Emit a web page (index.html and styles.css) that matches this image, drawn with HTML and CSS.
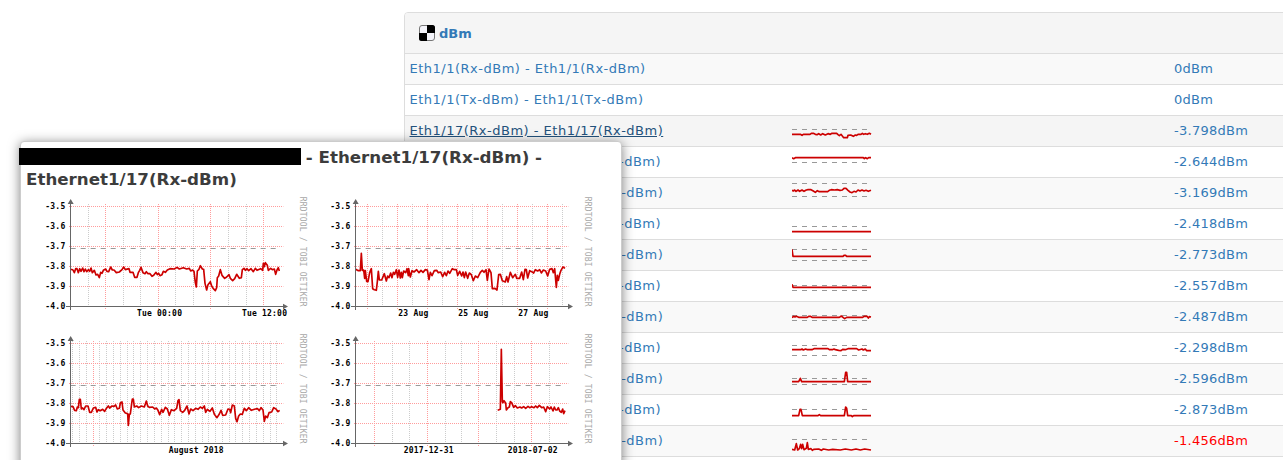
FILE: index.html
```html
<!DOCTYPE html>
<html lang="en">
<head>
  <meta charset="UTF-8">
  <title>dBm Sensors</title>
  <link rel="stylesheet" href="styles.css">
</head>
<body>

<!-- Sensor table -->
<div class="panel">
  <div class="panel-heading">
    <svg class="icon" width="16" height="16" viewBox="0 0 16 16">
      <rect x="0.5" y="0.5" width="15" height="15" rx="2.5" fill="#f4f4fa" stroke="#777"/>
      <path d="M8 0h5.5A2.5 2.5 0 0 1 16 2.5V8H8z M0 8h8v8H2.5A2.5 2.5 0 0 1 0 13.5z" fill="#000"/>
    </svg>
    <a>dBm</a>
  </div>
  <table class="sensors">
    <colgroup><col class="col-name"><col class="col-graph"><col></colgroup>
    <tbody id="sensorRows"></tbody>
  </table>
</div>

<!-- Graph popup -->
<div class="popup">
  <div class="popup-title"><span class="redacted"></span> - Ethernet1/17(Rx-dBm) - Ethernet1/17(Rx-dBm)</div>
  <div class="graphs" id="graphs"></div>
</div>

<script src="script.js"></script>
</body>
</html>
```

FILE: styles.css
```css
* { box-sizing: border-box; }
html, body {
  height: 100%;
  margin: 0;
  overflow: hidden;
  background: #fff;
  font-family: Verdana, "DejaVu Sans", sans-serif;
  font-size: 13px;
}
.panel {
  width: 920px;
  min-height: 480px;
  margin: 12px 0 0 404px;
  border: 1px solid #ddd;
  border-radius: 4px;
}
.panel-heading {
  display: flex;
  align-items: center;
  gap: 4px;
  height: 41px;
  padding: 0 14px;
  background: #f5f5f5;
  border-bottom: 1px solid #ddd;
  border-radius: 3px 3px 0 0;
  color: #337ab7;
  font-weight: bold;
}
.icon {
  display: block;
}
.sensors {
  width: 100%;
  table-layout: fixed;
  border-collapse: separate;
  border-spacing: 0;
}
.col-name { width: 382px; }
.col-graph { width: 382px; }
.sensors td {
  height: 31px;
  padding: 0 5px;
  border-bottom: 1px solid #ddd;
  color: #337ab7;
  line-height: 30px;
  white-space: nowrap;
}
.sensors tr:nth-child(odd) td { background: #f9f9f9; }
.sensors tr.active td { background: #f5f5f5; }
.sensors tr.active td.name {
  color: #23527c;
  text-decoration: underline;
}
.sensors td.name {
  padding-left: 4.5px;
  letter-spacing: 0.5px;
}
.sensors td.value { letter-spacing: 0.28px; }
.sensors tr.alert td.value { color: #f00; }
.sensors svg { display: block; }

.popup {
  position: absolute;
  left: 20px;
  top: 141px;
  width: 602px;
  height: 340px;
  padding: 4px 4px 0 5px;
  background: #fff;
  border: 1px solid #ccc;
  border-radius: 4px;
  box-shadow: 0 2px 12px rgba(0,0,0,0.5);
}
.popup-title {
  height: 44px;
  font-size: 16.7px;
  font-weight: bold;
  line-height: 22px;
  color: #3c3c3c;
}
.redacted {
  display: inline-block;
  width: 282px;
  height: 17px;
  margin: 0 -1px 0 -7px;
  vertical-align: -2px;
  background: #000;
}
.graphs {
  display: grid;
  grid-template-columns: 285px 285px;
  grid-auto-rows: 137px;
  margin-left: 4px;
}
.graphs svg { display: block; }

.axis-label {
  font-family: "DejaVu Sans Mono", monospace;
  font-size: 24px;
  font-weight: bold;
  letter-spacing: 0.6px;
}
.watermark {
  font-family: "DejaVu Sans Mono", monospace;
  font-size: 24px;
  letter-spacing: 0.55px;
  fill: #a8a8a8;
}
.grid-minor, .grid-major {
  stroke-width: 3;
  stroke-dasharray: 3 3;
}
.grid-minor { stroke: #ccc; }
.grid-major { stroke: #ff9c9c; }
.axis { stroke: #666; stroke-width: 3; }
.arrow { fill: #666; }
.limit {
  stroke: #999;
  stroke-width: 3;
  stroke-dasharray: 15 15;
}
.series {
  fill: none;
  stroke: #cc0000;
  stroke-width: 5;
  stroke-linejoin: round;
}
```

FILE: script.js
```js
// All plots use three drawing units per pixel.
const sensors = [
  { name: "Eth1/1(Rx-dBm)", value: "0dBm" },
  { name: "Eth1/1(Tx-dBm)", value: "0dBm" },
  { name: "Eth1/17(Rx-dBm)", value: "-3.798dBm", cls: "active", limits: [40.5], line: "0,55 25,55 30,58 34,55 54,55 58,52 64,52 70,55 75,56 80,53 86,57 92,53 100,57 108,53 115,55 120,52 134,52 138,56 142,59 147,55 151,60 155,65 166,65 168,58 176,57 184,61 190,57 194,58 198,55 207,55 211,52 215,55 220,53 226,55 232,52 237,55" },
  { name: "Eth1/17(Tx-dBm)", value: "-2.644dBm", limits: [46.5], line: "0,32 5,35 10,32 214,32 217,35 221,32 226,35 230,32 237,32" },
  { name: "Eth1/18(Rx-dBm)", value: "-3.169dBm", limits: [16.5, 55.5], line: "0,37 4,39 8,36 12,40 18,36 23,40 30,36 36,40 43,36 48,35 57,35 64,39 70,43 76,38 82,41 107,41 112,37 118,35 128,36 136,35 144,37 151,36 156,31 162,31 168,37 174,42 180,44 186,40 192,42 198,36 204,39 210,36 216,39 222,37 229,40 237,37" },
  { name: "Eth1/18(Tx-dBm)", value: "-2.418dBm", limits: [52.5], line: "0,68 237,68" },
  { name: "Eth1/19(Rx-dBm)", value: "-2.773dBm", limits: [28.5, 61.5], line: "0,28 3,49 153,49 156,46 161,46 164,49 237,49" },
  { name: "Eth1/19(Tx-dBm)", value: "-2.557dBm", limits: [43.5, 58.5], line: "0,40 3,49 237,49" },
  { name: "Eth1/20(Rx-dBm)", value: "-2.487dBm", limits: [40.5, 55.5], line: "0,47 5,43 9,45 13,43 20,46 46,46 50,43 55,43 60,46 142,46 148,42 153,46 158,50 164,46 212,46 216,43 225,43 229,48 232,44 237,45" },
  { name: "Eth1/20(Tx-dBm)", value: "-2.298dBm", limits: [37.5, 67.5], line: "0,50 27,50 30,48 34,51 41,48 46,50 60,50 66,47 108,47 112,50 121,50 126,48 130,50 140,52 147,53 152,49 160,50 168,47 194,47 200,51 210,48 214,51 220,48 224,53 237,53" },
  { name: "Eth1/21(Rx-dBm)", value: "-2.596dBm", limits: [43.5, 61.5], line: "0,53 20,53 25,43 29,53 157,53 161,25 164,25 167,53 237,53" },
  { name: "Eth1/21(Tx-dBm)", value: "-2.873dBm", limits: [43.5], line: "0,62 20,62 24,43 27,43 31,62 78,62 82,59 86,62 157,62 161,36 164,40 167,62 178,62 181,65 185,62 237,62" },
  { name: "Eth1/22(Rx-dBm)", value: "-1.456dBm", cls: "alert", limits: [40.5], line: "0,70 8,72 13,53 17,72 22,68 26,55 29,68 32,55 36,71 43,67 46,50 49,70 57,68 61,73 65,70 80,69 88,73 94,69 110,72 122,70 145,72 160,69 178,72 192,69 205,72 218,69 237,72" }
];

const charts = [
  {
    origin: [122, 49],
    major: [227, 385, 542, 701],
    minor: [176, 280, 332, 437, 490, 596, 648],
    labels: [[321, "Tue 00:00"], [636, "Tue 12:00"]],
    line: "123,238 129,240 133,248 137,236 141,236 145,248 149,236 153,244 158,234 162,245 166,237 170,245 175,239 179,244 183,234 187,248 193,241 198,255 203,253 208,263 212,247 216,250 220,241 227,237 231,244 236,245 242,231 247,240 252,240 259,248 268,246 276,239 281,231 286,239 297,236 300,247 309,247 314,262 321,262 325,248 329,241 333,232 339,248 345,251 349,245 354,251 360,251 366,259 371,256 378,247 382,254 386,250 390,257 396,254 400,244 406,247 412,240 420,236 433,237 441,232 448,237 460,233 470,237 478,235 482,243 488,240 492,244 496,278 499,291 502,243 507,238 511,227 517,237 521,238 525,280 530,300 534,284 541,275 545,288 550,296 556,302 560,293 562,263 566,258 571,239 576,256 584,265 590,261 597,254 601,265 608,272 614,266 620,253 628,265 634,263 637,239 642,235 646,241 651,236 656,242 663,236 670,245 676,235 681,241 692,236 698,241 700,220 703,230 706,218 712,226 715,241 722,235 727,239 733,237 737,253 741,240 745,233 748,243"
  },
  {
    origin: [107, 49],
    major: [142, 233, 323, 413, 502, 593, 683],
    minor: [188, 278, 367, 457, 547, 637, 728],
    labels: [[235, "23 Aug"], [415, "25 Aug"], [595, "27 Aug"]],
    line: "107,238 115,242 121,242 124,190 127,241 131,240 134,265 136,242 140,274 144,275 149,248 154,236 158,296 163,299 169,301 172,275 175,244 178,270 185,270 193,251 199,273 203,258 207,263 212,249 216,263 220,247 224,253 229,239 233,262 237,240 241,264 244,247 247,263 251,243 257,248 261,236 265,257 266,236 271,261 276,242 282,246 290,239 297,248 303,241 309,247 316,239 322,240 327,269 331,247 336,257 343,242 350,241 355,248 362,246 368,260 374,247 379,257 384,243 389,250 397,236 403,239 409,239 413,256 419,244 425,258 429,246 433,263 437,246 443,265 448,249 454,254 460,272 466,258 473,263 481,247 487,241 492,247 498,239 502,271 507,237 513,248 517,296 525,295 531,300 536,254 541,253 547,272 556,276 560,260 564,276 571,247 578,263 586,253 590,265 599,265 605,246 610,269 615,238 619,239 623,264 629,242 635,245 641,249 646,239 653,243 659,239 664,249 670,240 677,243 683,258 689,238 696,236 700,248 704,236 709,292 712,256 715,271 719,253 723,241 729,231 735,235"
  },
  {
    origin: [122, 55],
    major: [190],
    minor: [127, 148, 169, 208, 230, 250, 271, 291, 311, 332, 352, 372, 393, 414, 433, 454, 476, 496, 516, 536, 557, 576, 597, 617, 638, 658, 679, 700, 720, 740],
    labels: [[416, "August 2018"]],
    line: "123,244 129,245 134,256 139,257 142,246 145,248 148,223 151,223 154,252 158,249 162,254 167,243 174,243 179,262 184,262 190,249 197,247 201,261 205,254 211,257 218,253 224,259 229,250 235,243 239,249 246,243 252,244 257,240 262,252 268,250 271,234 276,231 279,255 286,264 293,266 295,301 298,268 301,267 305,236 307,222 310,222 313,246 320,243 326,248 334,243 343,246 349,228 353,243 358,247 368,246 374,252 379,249 384,256 389,269 395,253 399,262 406,247 412,252 418,271 424,254 432,257 440,250 444,227 447,224 451,257 458,262 464,256 471,243 477,267 482,252 489,257 497,250 504,253 511,246 517,250 523,243 527,262 532,253 540,259 547,249 553,268 561,278 568,267 573,256 578,271 587,270 594,252 599,253 602,263 607,240 613,243 617,280 621,290 626,273 631,267 637,268 643,250 649,257 656,248 664,256 676,252 683,251 688,257 693,248 699,255 703,289 707,273 712,278 717,263 725,261 731,248 738,252 744,260 749,256"
  },
  {
    origin: [107, 55],
    major: [164, 323, 476, 634],
    minor: [217, 268, 376, 424, 530, 583, 688],
    labels: [[251, "2017-12-31"], [563, "2018-07-02"]],
    line: "533,256 541,253 544,73 547,230 549,233 552,227 557,234 559,255 564,248 568,246 571,230 575,233 581,247 586,242 592,249 600,246 605,249 611,245 617,250 624,244 629,248 635,245 642,248 647,243 652,248 658,241 665,248 671,246 677,260 682,245 689,252 693,246 699,258 703,246 707,255 711,255 715,248 719,258 724,262 728,252 731,266 735,257"
  }
];

const vline = (x, y1, y2, cls) => `<line class="${cls}" x1="${x}" x2="${x}" y1="${y1}" y2="${y2}"/>`;
const hline = (y, x1, x2, cls) => `<line class="${cls}" x1="${x1}" x2="${x2}" y1="${y}" y2="${y}"/>`;

// snap a line to the centre of its pixel
const snap = v => Math.floor(v / 3) * 3 + 1.5;

function sparkline(s) {
  if (!s.line) return "";
  return `<svg width="80" height="30" viewBox="0 0 240 90">
    ${s.limits.map(y => hline(y, 0, 225, "limit")).join("")}
    <polyline class="series" points="${s.line}"/></svg>`;
}

function chart(c) {
  const dx = 122 - c.origin[0];
  const dy = 49 - c.origin[1];
  let out = "";
  c.minor.forEach(x => out += vline(snap(x + dx), 42, 348, "grid-minor"));
  c.major.forEach(x => out += vline(snap(x + dx), 42, 357, "grid-major"));
  ["-3.5", "-3.6", "-3.7", "-3.8", "-3.9", "-4.0"].forEach((label, i) => {
    const y = 49.5 + i * 60;
    if (i < 5) out += hline(y, 117, 760, "grid-major");
    out += `<text class="axis-label" x="46" y="${y + 8}">${label}</text>`;
  });
  out += hline(175.5, 122, 738, "limit");
  out += `<polyline class="series" transform="translate(${dx} ${dy})" points="${c.line}"/>`;
  out += vline(121.5, 39, 360, "axis") + hline(349.5, 108, 762, "axis");
  out += `<path class="arrow" d="M113 42h18l-9-15z M759 341v17l15-8.5z"/>`;
  c.labels.forEach(l => out += `<text class="axis-label" x="${l[0] + dx}" y="378">${l[1]}</text>`);
  out += `<text class="watermark" transform="translate(811 20) rotate(90)">RRDTOOL / TOBI OETIKER</text>`;
  return `<svg width="285" height="137" viewBox="0 0 855 411">${out}</svg>`;
}

document.getElementById("sensorRows").innerHTML = sensors.map(s => `
  <tr class="${s.cls || ""}">
    <td class="name">${s.name} - ${s.name}</td>
    <td>${sparkline(s)}</td>
    <td class="value">${s.value}</td>
  </tr>`).join("");

document.getElementById("graphs").innerHTML = charts.map(chart).join("");
```
